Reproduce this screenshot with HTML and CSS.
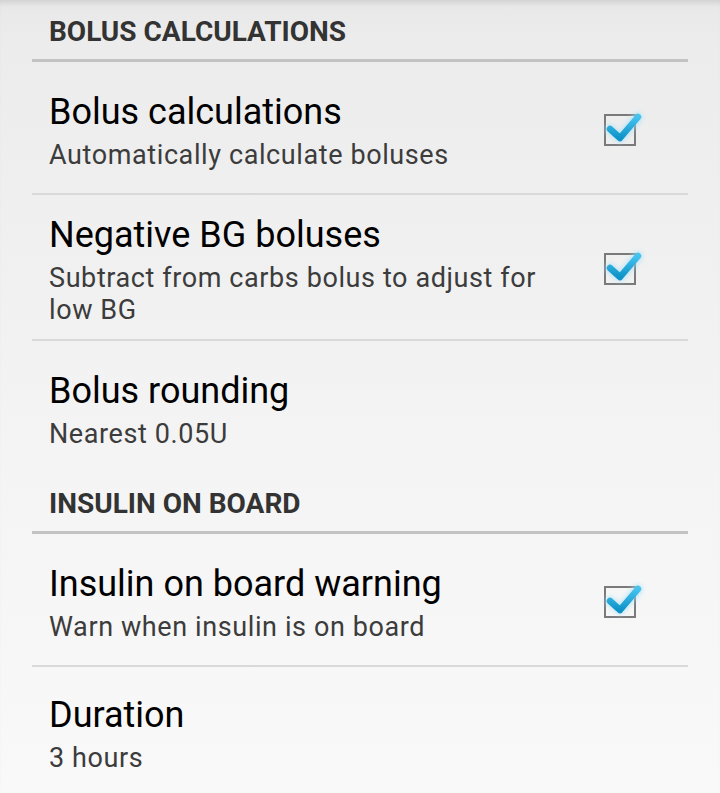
FILE: index.html
```html
<!DOCTYPE html>
<html>
<head>
<meta charset="utf-8">
<link rel="stylesheet" href="styles.css">
</head>
<body>
<div class="screen">
  <div class="list">
    <div class="cat-header">BOLUS CALCULATIONS</div>
    <div class="pref">
      <div class="pref-text">
        <div class="pref-title">Bolus calculations</div>
        <div class="pref-summary">Automatically calculate boluses</div>
      </div>
      <svg class="check" width="48" height="40" viewBox="0 0 48 40" aria-hidden="true">
        <defs>
          <filter id="glow1" x="-50%" y="-50%" width="200%" height="200%"><feGaussianBlur stdDeviation="2.4"/></filter>
          <linearGradient id="blue1" x1="0" y1="0" x2="0" y2="1"><stop offset="0" stop-color="#45c3ef"/><stop offset="1" stop-color="#0e93c8"/></linearGradient>
        </defs>
        <rect x="5" y="5" width="30" height="30" fill="none" stroke="#7a7a7a" stroke-width="2"/>
        <path d="M10 19 L20 28 L38 7" fill="none" stroke="#a8e0f6" stroke-width="9" stroke-linecap="round" stroke-linejoin="round" filter="url(#glow1)" opacity="0.75"/>
        <path d="M10 19 L20 28 L38 7" fill="none" stroke="url(#blue1)" stroke-width="6.5" stroke-linecap="round" stroke-linejoin="round"/>
      </svg>
    </div>
    <div class="divider"></div>
    <div class="pref">
      <div class="pref-text">
        <div class="pref-title">Negative BG boluses</div>
        <div class="pref-summary">Subtract from carbs bolus to adjust for low BG</div>
      </div>
      <svg class="check" width="48" height="40" viewBox="0 0 48 40" aria-hidden="true">
        <rect x="5" y="5" width="30" height="30" fill="none" stroke="#7a7a7a" stroke-width="2"/>
        <path d="M10 19 L20 28 L38 7" fill="none" stroke="#a8e0f6" stroke-width="9" stroke-linecap="round" stroke-linejoin="round" filter="url(#glow1)" opacity="0.75"/>
        <path d="M10 19 L20 28 L38 7" fill="none" stroke="url(#blue1)" stroke-width="6.5" stroke-linecap="round" stroke-linejoin="round"/>
      </svg>
    </div>
    <div class="divider"></div>
    <div class="pref">
      <div class="pref-text">
        <div class="pref-title">Bolus rounding</div>
        <div class="pref-summary">Nearest 0.05U</div>
      </div>
    </div>
    <div class="cat-header">INSULIN ON BOARD</div>
    <div class="pref">
      <div class="pref-text">
        <div class="pref-title">Insulin on board warning</div>
        <div class="pref-summary">Warn when insulin is on board</div>
      </div>
      <svg class="check" width="48" height="40" viewBox="0 0 48 40" aria-hidden="true">
        <rect x="5" y="5" width="30" height="30" fill="none" stroke="#7a7a7a" stroke-width="2"/>
        <path d="M10 19 L20 28 L38 7" fill="none" stroke="#a8e0f6" stroke-width="9" stroke-linecap="round" stroke-linejoin="round" filter="url(#glow1)" opacity="0.75"/>
        <path d="M10 19 L20 28 L38 7" fill="none" stroke="url(#blue1)" stroke-width="6.5" stroke-linecap="round" stroke-linejoin="round"/>
      </svg>
    </div>
    <div class="divider"></div>
    <div class="pref pref-last">
      <div class="pref-text">
        <div class="pref-title">Duration</div>
        <div class="pref-summary">3 hours</div>
      </div>
    </div>
  </div>
</div>
</body>
</html>
```

FILE: styles.css
```css
html, body {
  margin: 0;
  padding: 0;
  height: 100%;
}
body {
  font-family: Roboto, "Noto Sans", sans-serif;
  background: linear-gradient(to bottom, #e8e8e8 0px, #ececec 40px, #f4f4f4 450px, #f9f9f9 793px);
  overflow: hidden;
}
.screen {
  min-height: 793px;
  box-shadow: inset 0 6px 6px -4px rgba(0,0,0,0.12);
}
.list {
  padding: 0 32px;
}
.cat-header {
  box-sizing: border-box;
  height: 62px;
  padding: 13px 0 0 17px;
  font-size: 28px;
  line-height: 38px;
  font-weight: bold;
  color: #333333;
  border-bottom: 3px solid #c2c2c2;
}
.pref {
  box-sizing: border-box;
  min-height: 131px;
  padding: 19px 0 13px 17px;
  display: flex;
  align-items: center;
}
.pref-last {
  padding-top: 16px;
}
.pref-text {
  flex: 1;
  padding-right: 40px;
}
.pref-title {
  font-size: 36px;
  line-height: 42px;
  color: #000;
}
.pref-summary {
  margin-top: 6px;
  font-size: 27px;
  line-height: 32px;
  letter-spacing: 0.6px;
  color: #3c3c3c;
}
.check {
  flex: none;
  margin-right: 40px;
  margin-top: -2px;
  overflow: visible;
}
.divider {
  height: 2px;
  background: #d9d9d9;
}
```
